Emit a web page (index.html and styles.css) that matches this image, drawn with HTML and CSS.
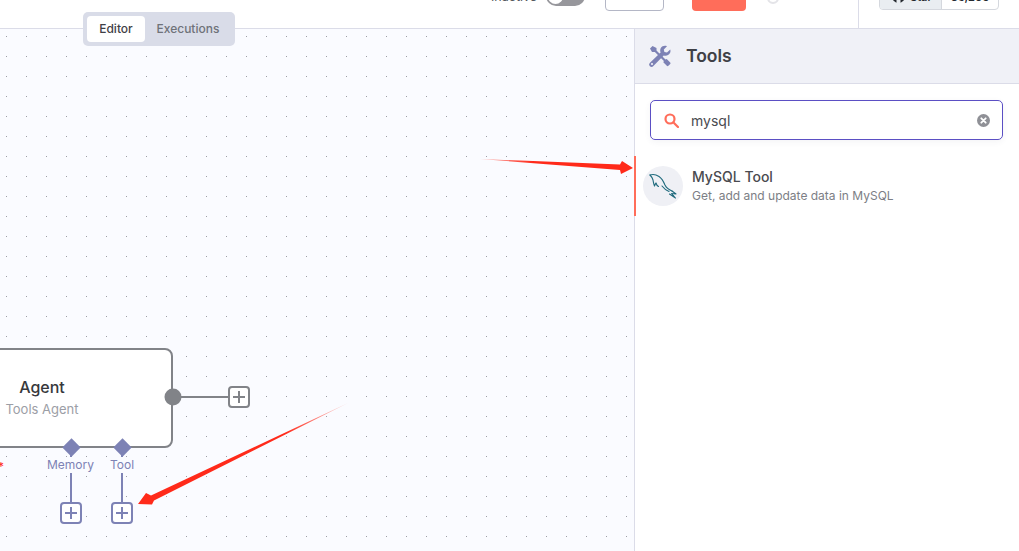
FILE: index.html
```html
<!DOCTYPE html>
<html lang="en">
<head>
    <meta charset="UTF-8">
    <meta name="viewport" content="width=device-width, initial-scale=1.0">
    <title>Tools</title>
    <link rel="stylesheet" href="styles.css">
</head>
<body>
    <header class="topbar">
        <div class="status">
            <span class="status-label">Inactive</span>
            <span class="toggle"><span class="knob"></span></span>
        </div>
        <button class="btn-share">Share</button>
        <button class="btn-save">Save</button>
        <span class="history"></span>
        <div class="star-area">
            <div class="star-group">
                <span class="star-left">
                    <svg width="13" height="13" viewBox="0 0 13 13"><circle cx="6.5" cy="6.5" r="6.5" fill="#24292f"/><path d="M4.500 13V9h4v4z" fill="#e9edf1"/></svg>
                    Star
                </span>
                <span class="star-count">36,205</span>
            </div>
        </div>
    </header>

    <main class="workspace">
        <section class="canvas">
            <div class="tabs">
                <span class="tab active">Editor</span>
                <span class="tab">Executions</span>
            </div>

            <div class="node">
                <div class="node-title">Agent</div>
                <div class="node-sub">Tools Agent</div>
            </div>

            <svg class="wires" width="634" height="522" viewBox="0 0 634 522">
                <path class="wire-grey" d="M173 368H229"/>
                <path class="wire-blue" d="M71 418V474M122 418V474"/>
                <circle cx="173" cy="368" r="8.5" fill="#818388"/>
            </svg>

            <span class="diamond d-memory"></span>
            <span class="diamond d-tool"></span>
            <span class="port-label l-memory">Memory</span>
            <span class="port-label l-tool">Tool</span>
            <span class="required">*</span>

            <span class="plus plus-main"><svg width="12" height="12" viewBox="0 0 12 12"><path d="M6 0V12M0 6H12"/></svg></span>
            <span class="plus plus-blue p-memory"><svg width="12" height="12" viewBox="0 0 12 12"><path d="M6 0V12M0 6H12"/></svg></span>
            <span class="plus plus-blue p-tool"><svg width="12" height="12" viewBox="0 0 12 12"><path d="M6 0V12M0 6H12"/></svg></span>

            <!-- hand drawn red arrows from the annotation -->
            <svg class="arrows" width="640" height="522" viewBox="0 0 640 522">
                <defs>
                    <linearGradient id="fade1" x1="480" y1="130" x2="633" y2="139" gradientUnits="userSpaceOnUse">
                        <stop offset="0" stop-color="#ff2a1a" stop-opacity="0.4"/>
                        <stop offset="0.35" stop-color="#ff2a1a"/>
                    </linearGradient>
                    <linearGradient id="fade2" x1="348" y1="374" x2="138" y2="475" gradientUnits="userSpaceOnUse">
                        <stop offset="0" stop-color="#ff2a1a" stop-opacity="0.2"/>
                        <stop offset="0.3" stop-color="#ff2a1a"/>
                    </linearGradient>
                </defs>
                <polygon fill="url(#fade1)" points="480,130 620,135.500 622,132 633,139 621,145 620,141"/>
                <polygon fill="url(#fade2)" points="348,374 151,466.500 146,464 138,475 152,475.500 154,471.500"/>
            </svg>
        </section>

        <aside class="panel">
            <div class="panel-head">
                <svg class="tools-icon" width="22" height="22" viewBox="0 0 22 22" fill="#7d82b5">
                    <path d="M1 3.500 3.500 1 7.500 3v2.500l9 9 1.200-.6 3.500 3.500c.5.5.5 1.100 0 1.600l-1.800 1.800c-.5.5-1.100.5-1.600 0l-3.500-3.500.6-1.300-9-9H3z"/>
                    <path d="M21.200 4.400 18 7.600 15.400 7l-.6-2.600L18 1.200c-2.400-.8-5-.2-6.200 1.900-.8 1.400-.8 3-.2 4.300L1 17.700c-1.200 1.200-1.200 2.600-.1 3.500 1 1 2.400 1 3.500-.1L14.700 10.400c1.400.6 3 .5 4.300-.3 2.100-1.200 3-3.500 2.200-5.700z"/>
                    <circle cx="3" cy="19" r="1.100" fill="#f0f1f7"/>
                </svg>
                <span class="panel-title">Tools</span>
            </div>

            <div class="search">
                <svg class="search-icon" width="15" height="15" viewBox="0 0 15 15" fill="none" stroke="#ff6d5a" stroke-width="2.200">
                    <circle cx="6" cy="6" r="4.500"/>
                    <path d="M9.500 9.500 14 14" stroke-linecap="round"/>
                </svg>
                <span class="search-text">mysql</span>
                <svg class="clear-icon" width="13" height="13" viewBox="0 0 13 13">
                    <circle cx="6.500" cy="6.500" r="6.500" fill="#8f9096"/>
                    <path d="M4.300 4.300 8.700 8.700M8.700 4.300 4.300 8.700" stroke="#fff" stroke-width="1.800" stroke-linecap="round"/>
                </svg>
            </div>

            <div class="result">
                <div class="result-icon">
                    <svg width="30" height="30" viewBox="0 0 30 30" fill="none" stroke="#1f6a7d" stroke-width="1.100" stroke-linejoin="round" stroke-linecap="round">
                        <path d="M2 4C5 3 8 3.500 11 5.500c3 2 4.500 5 6 8.500 1.200 2.500 3.500 4.500 7 6"/>
                        <path d="M2 4c1.500 1.500 2.500 3 3 5 .4 2 .6 4 1.500 6 .5-1.500 1-2.500 1.500-3 .4 1.500 1 2.800 2.500 3.500"/>
                        <path d="M14 15c1.500 2 3.500 4 7 5.500"/>
                        <path d="M24 20l4 3-4.500-.5 4 4.500-6-4"/>
                    </svg>
                </div>
                <div class="result-info">
                    <div class="result-name">MySQL Tool</div>
                    <div class="result-desc">Get, add and update data in MySQL</div>
                </div>
            </div>
        </aside>
    </main>
</body>
</html>
```

FILE: styles.css
```css
* {
    box-sizing: border-box;
}
html, body {
    margin: 0;
    height: 100%;
    overflow: hidden;
}
body {
    font-family: Inter, "Liberation Sans", sans-serif;
    background: #fff;
    color: #3f3f46;
}

/* top bar, cut off by the screenshot */
.topbar {
    height: 29px;
    display: flex;
    align-items: flex-start;
    border-bottom: 1px solid #dbdce8;
    overflow: hidden;
    background: #fff;
}
.status {
    display: flex;
    align-items: flex-end;
    gap: 9px;
    height: 6px;
    margin-left: 491px;
}
.status-label {
    width: 46px;
    margin-bottom: 2px;
    font-size: 12.500px;
    line-height: 14px;
    white-space: nowrap;
    color: #55585e;
}
.toggle {
    width: 39px;
    height: 20px;
    border-radius: 10px;
    background: #97979c;
    display: flex;
    align-items: center;
    padding: 2px;
    flex: none;
}
.knob {
    width: 15px;
    height: 15px;
    border-radius: 50%;
    background: #fff;
}
.btn-share {
    width: 59px;
    height: 30px;
    margin: -19px 0 0 20px;
    border: 1px solid #b4b7c6;
    border-radius: 4px;
    background: #fff;
    font-size: 12px;
    color: #55585e;
    padding: 0;
}
.btn-save {
    width: 54px;
    height: 30px;
    margin: -19px 0 0 28px;
    border: 0;
    border-radius: 4px;
    background: #ff6d5a;
    font-size: 12px;
    color: #fff;
    padding: 0;
}
.history {
    width: 12px;
    height: 12px;
    margin: -8px 0 0 21px;
    border: 2px solid #e4e4e8;
    border-radius: 50%;
}
.star-area {
    width: 161px;
    height: 28px;
    margin-left: 79px;
    padding-left: 20px;
    border-left: 1px solid #dbdce8;
}
.star-group {
    display: flex;
    width: 120px;
    height: 30px;
    margin-top: -20px;
    border: 1px solid #d5d8de;
    border-radius: 4px;
    font-size: 11px;
    font-weight: 600;
    line-height: 33px;
    color: #24292f;
    overflow: hidden;
}
.star-left {
    display: flex;
    align-items: flex-end;
    gap: 5px;
    width: 62px;
    background: #e9edf1;
    border-right: 1px solid #d5d8de;
    padding: 0 0 4px 12px;
    line-height: 15px;
}
.star-left svg {
    margin-bottom: 2px;
}
.star-count {
    flex: 1;
    text-align: center;
}

.workspace {
    display: flex;
    height: 522px;
}

/* canvas */
.canvas {
    position: relative;
    width: 634px;
    height: 522px;
    background-color: #fafbff;
    background-image: radial-gradient(circle at 0.5px 0.5px, #9c9ea6 0.5px, transparent 0.6px);
    background-size: 20px 20px;
    background-position: 6px 7px;
}
.tabs {
    position: absolute;
    left: 83px;
    top: -17px;
    display: flex;
    padding: 4px;
    background: #d9dce8;
    border-radius: 5px;
    font-size: 12px;
    line-height: 26px;
    color: #6f7279;
}
.tab {
    padding: 0 11.500px;
    font-weight: 500;
}
.tab.active {
    width: 58px;
    padding: 0;
    text-align: center;
    background: #fff;
    border-radius: 4px;
    color: #3f4046;
}
.wires, .arrows {
    position: absolute;
    left: 0;
    top: 0;
}
.arrows {
    overflow: visible;
}
.wire-grey {
    stroke: #818388;
    stroke-width: 2;
    fill: none;
}
.wire-blue {
    stroke: #7d82b5;
    stroke-width: 2;
    fill: none;
}
.node {
    position: absolute;
    left: -89px;
    top: 319px;
    width: 262px;
    height: 100px;
    display: flex;
    flex-direction: column;
    align-items: center;
    justify-content: center;
    gap: 4px;
    background: #fff;
    border: 2px solid #818388;
    border-radius: 8px;
}
.node-title {
    font-size: 16px;
    font-weight: 500;
    line-height: 20px;
    margin-top: -3px;
    color: #37383c;
}
.node-sub {
    font-size: 13px;
    line-height: 16px;
    color: #9c9ea6;
}
.diamond {
    position: absolute;
    top: 411.500px;
    width: 13px;
    height: 13px;
    background: #7d82b5;
    transform: rotate(45deg);
}
.d-memory { left: 64.500px; }
.d-tool { left: 115.500px; }
.port-label {
    position: absolute;
    top: 428px;
    font-size: 12px;
    line-height: 16px;
    color: #7d82b5;
    background: #fafbff;
}
.l-memory { left: 47px; }
.l-tool { left: 110px; }
.required {
    position: absolute;
    left: -2px;
    top: 431px;
    font-size: 12px;
    line-height: 14px;
    color: #ff2a1a;
}
.plus {
    position: absolute;
    width: 22px;
    height: 22px;
    display: flex;
    align-items: center;
    justify-content: center;
    background: #fff;
    border: 2px solid #818388;
    border-radius: 4px;
}
.plus path {
    stroke: #818388;
    stroke-width: 2;
    fill: none;
}
.plus-main {
    left: 228px;
    top: 357px;
}
.plus-blue {
    top: 473px;
    border-color: #7d82b5;
}
.plus-blue path {
    stroke: #7d82b5;
}
.p-memory { left: 60px; }
.p-tool { left: 111px; }

/* side panel */
.panel {
    width: 385px;
    border-left: 1px solid #dbdce8;
    background: #fff;
    position: relative;
}
.panel-head {
    height: 55px;
    display: flex;
    align-items: center;
    gap: 15px;
    padding-left: 14px;
    background: #f0f1f7;
    border-bottom: 1px solid #dbdce8;
}
.panel-title {
    margin-top: -2px;
    font-size: 17.500px;
    font-weight: 600;
    color: #3f4046;
}
.search {
    display: flex;
    align-items: center;
    height: 40px;
    margin: 16px 16px 16px 15px;
    padding: 0 12px 0 13px;
    border: 1px solid #5b4fc4;
    border-radius: 5px;
    box-shadow: 0 2px 6px rgba(60, 60, 100, 0.06);
}
.search-text {
    flex: 1;
    margin-left: 12px;
    font-size: 14px;
    color: #4a4b50;
}
.result {
    display: flex;
    align-items: center;
    gap: 9px;
    height: 60px;
    margin-left: -1px;
    padding-left: 7px;
    border-left: 2px solid #ff6d5a;
}
.result-icon {
    width: 40px;
    height: 40px;
    border-radius: 50%;
    background: #eff0f5;
    display: flex;
    align-items: center;
    justify-content: center;
}
.result-name {
    font-size: 14px;
    font-weight: 500;
    line-height: 18px;
    color: #4a4b50;
}
.result-desc {
    margin-top: 1px;
    font-size: 12px;
    line-height: 18px;
    color: #7c7e85;
}
```
